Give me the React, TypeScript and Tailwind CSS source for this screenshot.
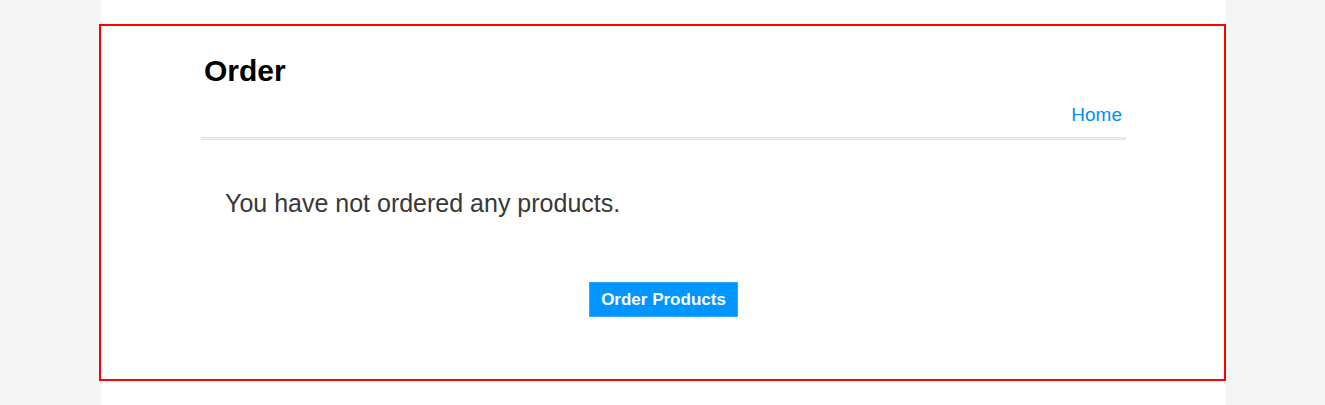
export default function App() {
  return (
    <div className="min-h-screen bg-[#f5f5f5] px-[99px] font-['Liberation_Sans',Arial,sans-serif]">
      <div className="flex min-h-screen flex-col">
        <div className="ml-0.5 h-6 bg-white" />
        <main className="border-2 border-[#ff0000] bg-white pr-[98px] pl-[100px] pb-[62px]">
          <header className="px-[3px] pt-6">
            <h1 className="text-[30px] leading-[42px] font-bold text-black">Order</h1>
            <nav className="mt-[7px] flex justify-end px-px">
              <a href="#home" className="text-[19px] leading-8 text-[#0090f0]">Home</a>
            </nav>
          </header>
          <hr className="mt-[6px] h-[3px] border border-[#e4e4e4] bg-[#f0f0f0]" />
          <p className="mt-[47px] px-6 text-[25px] leading-8 text-[#383838]">You have not ordered any products.</p>
          <div className="mt-[63px] flex justify-center">
            <button type="button" className="border border-[#2ea8ff] bg-[#0095ff] px-[11px] text-[17px] leading-[33px] font-bold text-white">Order Products</button>
          </div>
        </main>
        <div className="ml-0.5 grow bg-white" />
      </div>
    </div>
  );
}
